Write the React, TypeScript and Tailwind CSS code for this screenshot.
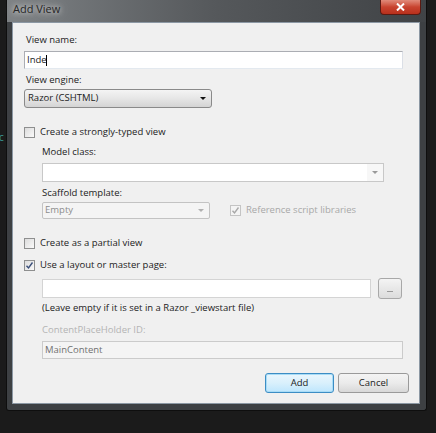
import React from "react";

const font = { fontFamily: '"Open Sans", "Noto Sans", sans-serif' };

function Check({ checked, disabled }: { checked?: boolean; disabled?: boolean }) {
  return (
    <div
      className={`w-[11px] h-[11px] border flex items-center justify-center ${
        disabled ? "border-[#c4c4c4] bg-[#f4f4f4]" : "border-[#8e8f8f] bg-gradient-to-br from-[#dcdcdc] to-[#fafafa]"
      }`}
    >
      {checked && (
        <svg width="9" height="9" viewBox="0 0 9 9">
          <path
            d="M1.5 4.8 L3.5 7 L7.5 1.5"
            fill="none"
            stroke={disabled ? "#a8a8a8" : "#3a4f7a"}
            strokeWidth="1.4"
          />
        </svg>
      )}
    </div>
  );
}

function Arrow({ color }: { color: string }) {
  return (
    <svg width="6" height="3" viewBox="0 0 6 3">
      <path d="M0 0 L6 0 L3 3 Z" fill={color} />
    </svg>
  );
}

export default function App() {
  return (
    <div className="w-[436px] h-[433px] bg-[#1b1b1b] overflow-hidden flex text-[9.5px] text-[#222]" style={font}>
      {/* left strip of background */}
      <div className="w-[6px] shrink-0 overflow-hidden flex flex-col">
        <div className="h-[131px]" />
        <div className="text-[#3a9c98] text-[10px] leading-[12px] -ml-[5px]">rc</div>
      </div>
      {/* window */}
      <div className="w-[421px] h-[411px] shrink-0 flex flex-col bg-[#3d4043] border border-[#0e0e0e] border-t-0 rounded-b-[3px]">
        {/* title bar */}
        <div className="h-[22px] shrink-0 flex items-start bg-gradient-to-r from-[#7e8285] via-[#55585b] to-[#404346]">
          <div className="pl-[6px] pt-[2px] text-[11px] leading-[14px] text-[#262626] [text-shadow:0_0_5px_#d8d8d8,0_0_8px_#c0c0c0]">
            Add View
          </div>
          <div className="flex-1" />
          <div className="mr-[5px] w-[41px] h-[15px] rounded-b-[4px] border border-[#5a1a12] border-t-0 bg-gradient-to-b from-[#e08a7a] via-[#c8432f] to-[#b8301c] flex items-center justify-center">
            <svg width="9" height="8" viewBox="0 0 9 8">
              <path d="M1 0.5 L8 7.5 M8 0.5 L1 7.5" stroke="#ffffff" strokeWidth="2" />
            </svg>
          </div>
        </div>
        {/* content */}
        <div className="ml-[5px] mr-[6px] h-[382px] bg-[#f0f0f0] border border-[#8c98a4] flex flex-col pl-[11px] pr-[11px]">
          <div className="mt-[9px] h-[16px] leading-[16px] pl-[2px]">View name:</div>
          <div className="mt-[3px] h-[18px] w-[379px] bg-white border border-[#abadb3] border-b-[#e3e9ef] border-r-[#dbdfe6] flex items-center pl-[2px] leading-[16px]">
            Inde<span className="border-l border-[#000] h-[11px] -ml-[1px]" />
          </div>
          <div className="mt-[3px] h-[16px] leading-[16px] pl-[2px]">View engine:</div>
          <div className="mt-[1px] h-[19px] w-[188px] rounded-[3px] border border-[#8a8a8a] bg-gradient-to-b from-[#f4f4f4] via-[#e6e6e6] to-[#d4d4d4] flex items-center pl-[3px] pr-[5px]">
            <span className="flex-1">Razor (CSHTML)</span>
            <Arrow color="#111" />
          </div>
          <div className="mt-[16px] h-[16px] flex items-center gap-[5px]">
            <Check />
            <span>Create a strongly-typed view</span>
          </div>
          <div className="pl-[18px] flex flex-col">
            <div className="mt-[4px] h-[16px] leading-[16px]">Model class:</div>
            <div className="mt-[3px] h-[19px] w-[342px] bg-white border border-[#c8c8c8] flex items-center justify-end">
              <div className="w-[16px] h-full bg-[#f7f7f7] flex items-center justify-center">
                <Arrow color="#9a9a9a" />
              </div>
            </div>
            <div className="mt-[3px] h-[16px] leading-[16px]">Scaffold template:</div>
            <div className="mt-[1px] h-[17px] flex items-center">
              <div className="h-[17px] w-[168px] rounded-[2px] border border-[#c3c3c3] bg-[#f4f4f4] flex items-center pl-[2px] pr-[5px] text-[#8d8d8d]">
                <span className="flex-1">Empty</span>
                <Arrow color="#b0b0b0" />
              </div>
              <div className="ml-[20px] flex items-center gap-[5px] text-[#a8a8a8]">
                <Check checked disabled />
                <span>Reference script libraries</span>
              </div>
            </div>
          </div>
          <div className="mt-[16px] h-[16px] flex items-center gap-[5px]">
            <Check />
            <span>Create as a partial view</span>
          </div>
          <div className="mt-[6px] h-[16px] flex items-center gap-[5px]">
            <Check checked />
            <span>Use a layout or master page:</span>
          </div>
          <div className="pl-[18px] flex flex-col">
            <div className="mt-[5px] h-[21px] flex items-center">
              <div className="h-[19px] w-[329px] bg-white border border-[#d4d4d4]" />
              <div className="ml-[7px] h-[21px] w-[24px] rounded-[3px] border border-[#a8a8a8] bg-gradient-to-b from-[#f4f4f4] to-[#dcdcdc] flex items-end justify-center pb-[6px]">
                <div className="w-[6px] border-t border-[#9a9a9a]" />
              </div>
            </div>
            <div className="mt-[1px] h-[16px] leading-[16px]">(Leave empty if it is set in a Razor _viewstart file)</div>
            <div className="mt-[6px] h-[16px] leading-[16px] text-[#b4b4b4]">ContentPlaceHolder ID:</div>
            <div className="mt-[3px] h-[18px] w-[361px] bg-[#f4f4f4] border border-[#cbcbcb] flex items-center pl-[2px] text-[#707070]">
              MainContent
            </div>
          </div>
          <div className="mt-[14px] h-[20px] flex justify-end gap-[4px] -mr-[1px]">
            <div className="w-[69px] h-[20px] rounded-[3px] border border-[#3c8dc4] bg-gradient-to-b from-[#eaf6fd] via-[#d9f0fc] to-[#bee6fd] shadow-[inset_0_0_0_1px_#a9dcf6] flex items-center justify-center">
              Add
            </div>
            <div className="w-[71px] h-[20px] rounded-[3px] border border-[#9a9a9a] bg-gradient-to-b from-[#f4f4f4] via-[#ebebeb] to-[#d8d8d8] flex items-center justify-center">
              Cancel
            </div>
          </div>
        </div>
      </div>
    </div>
  );
}
